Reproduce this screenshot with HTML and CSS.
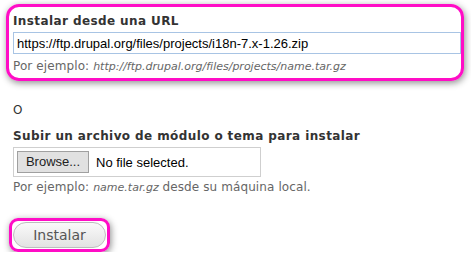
FILE: index.html
```html
<!DOCTYPE html>
<html lang="es">
<head>
  <meta charset="UTF-8" />
  <title>Instalar módulo o tema</title>
  <link rel="stylesheet" href="styles.css">
</head>
<body>
  <form class="install-form">
    <!-- Install from URL -->
    <div class="form-item mark">
      <label for="project-url">Instalar desde una URL</label>
      <input type="text" id="project-url" class="url-input" value="https://ftp.drupal.org/files/projects/i18n-7.x-1.26.zip">
      <div class="description">Por ejemplo: <em>http://ftp.drupal.org/files/projects/name.tar.gz</em></div>
    </div>

    <p class="or">O</p>

    <!-- Upload -->
    <div class="form-item upload">
      <label>Subir un archivo de módulo o tema para instalar</label>
      <div class="file-box">
        <span class="browse-btn">Browse...</span>
        <span class="file-name">No file selected.</span>
      </div>
      <div class="description">Por ejemplo: <em>name.tar.gz</em> desde su máquina local.</div>
    </div>

    <div class="actions mark">
      <button type="button" class="submit-btn">Instalar</button>
    </div>
  </form>
</body>
</html>
```

FILE: styles.css
```css
body {
  margin: 0;
  padding: 0;
  background-color: white;
  font-family: "DejaVu Sans", Verdana, sans-serif;
  color: #333;
}

.install-form {
  padding: 4px 7px 0 6px;
}

.mark {
  border: 3px solid #ff0dc6;
  border-radius: 13px;
  box-shadow: 1px 2px 7px rgba(0,0,0,0.45);
}

.form-item.mark {
  padding: 7px 0 4px 4px;
}

label {
  display: block;
  font-size: 12px;
  font-weight: bold;
  letter-spacing: 0.4px;
  color: #333;
  line-height: 15px;
  margin-bottom: 3px;
}

.url-input {
  display: block;
  box-sizing: border-box;
  width: 100%;
  height: 22px;
  margin: 0;
  padding: 1px 3px;
  border: 1px solid #a8c4e4;
  font-family: "Liberation Sans", Arial, sans-serif;
  font-size: 13px;
  color: #000;
  outline: none;
}

.description {
  font-size: 12px;
  letter-spacing: 0.1px;
  color: #666;
  line-height: 14px;
  margin-top: 5px;
}

.description em {
  font-size: 11px;
  letter-spacing: 0;
  font-style: italic;
}

.or {
  margin: 22px 0 0 7px;
  font-size: 12px;
  line-height: 14px;
  color: #333;
}

.upload {
  margin: 12px 0 0 7px;
}

.file-box {
  display: flex;
  align-items: center;
  gap: 7px;
  width: 243px;
  height: 28px;
  border: 1px solid #cfcfcf;
  padding-left: 3px;
}

.browse-btn {
  box-sizing: border-box;
  width: 72px;
  height: 22px;
  background-color: #e1e1e1;
  border: 1px solid #a0a0a0;
  font-family: "Liberation Sans", Arial, sans-serif;
  font-size: 13px;
  color: #222;
  text-align: center;
  line-height: 20px;
}

.file-name {
  font-family: "Liberation Sans", Arial, sans-serif;
  font-size: 13px;
  color: #000;
}

.upload .description {
  margin-top: 3px;
}

.actions {
  display: inline-block;
  margin: 23px 0 0 3px;
  padding: 1px;
  border-radius: 9px;
}

.submit-btn {
  display: block;
  width: 93px;
  height: 26px;
  border: 1px solid #bdbdbd;
  border-radius: 13px;
  background: linear-gradient(#fafafa, #e2e2e2);
  font-family: "DejaVu Sans", Verdana, sans-serif;
  font-size: 14px;
  color: #555;
  cursor: pointer;
}
```
